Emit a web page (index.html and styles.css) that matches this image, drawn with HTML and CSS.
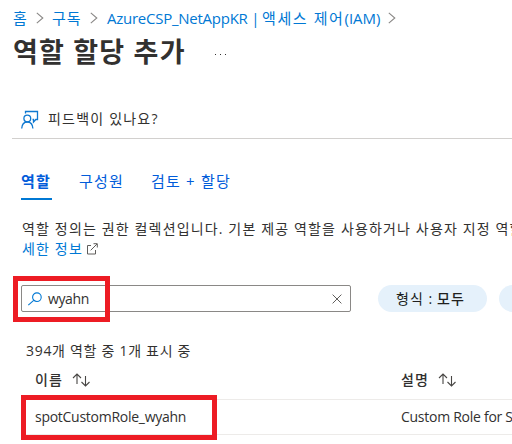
FILE: index.html
```html
<!DOCTYPE html>
<html lang="ko">
<head>
<meta charset="utf-8">
<title>역할 할당 추가</title>
<link rel="stylesheet" href="styles.css">
</head>
<body>
<nav class="breadcrumb">
  <a class="c-home">홈</a>
  <svg class="chev" viewBox="0 0 8 12"><path d="M.8.8 6.8 6 .8 11.2"/></svg>
  <a class="c-sub">구독</a>
  <svg class="chev" viewBox="0 0 8 12"><path d="M.8.8 6.8 6 .8 11.2"/></svg>
  <a class="c-iam"><span class="c-name">AzureCSP_NetAppKR |</span><span class="c-access">액세스 제어<span class="c-code">(IAM)</span></span></a>
  <svg class="chev" viewBox="0 0 8 12"><path d="M.8.8 6.8 6 .8 11.2"/></svg>
</nav>
<header class="title-row"><h1>역할 할당 추가</h1><span class="more"><i></i><i></i><i></i></span></header>
<div class="toolbar">
  <svg class="feedback-icon" viewBox="0 0 18 19"><path d="M4.500 3.500V1.500h12v8h-1.700l-2.300 2.600V9.500h-1"/><circle cx="6.300" cy="8.500" r="3.400"/><path d="M.7 18.500c.3-4 2.500-6.500 5.600-6.500s5.300 2.500 5.600 6.500"/></svg>
  <span>피드백이 있나요?</span>
</div>
<div class="tabs"><a class="tab active">역할</a><a class="tab t-members">구성원</a><a class="tab t-review">검토 + 할당</a></div>
<div class="desc">
  <div class="d1">역할 정의는 권한 컬렉션입니다. 기본 제공 역할을 사용하거나 사용자 지정 역할을</div>
  <div class="d2"><a>세한 정보</a><svg viewBox="0 0 12 12"><path d="M5 2.500H1.500v8.500h8V7M7.500.7h3.800v3.800M11 1 4.700 7.300"/></svg></div>
</div>
<div class="filters">
  <div class="search">
    <svg class="lens" viewBox="0 0 16 14"><circle cx="9.900" cy="5.200" r="4.300"/><path d="M6.700 8.300 1.300 13.200"/></svg>
    <span>wyahn</span>
    <svg class="clear" viewBox="0 0 10 10"><path d="m.6.6 8.800 8.800M9.400.6.6 9.400"/></svg>
    <div class="mark mark-search"></div>
  </div>
  <div class="pill"><span class="p-label">형식 :</span><b>모두</b></div>
  <div class="pill"></div>
</div>
<div class="count">394개 역할 중 1개 표시 중</div>
<div class="table">
  <div class="tr head">
    <div class="cell-name"><span>이름</span><svg class="sort" viewBox="0 0 18 14"><path d="M5 11V1M1 5l4-4 4 4M13.500 3v10M9.500 9l4 4 4-4"/></svg></div>
    <div class="cell-desc"><span>설명</span><svg class="sort" viewBox="0 0 18 14"><path d="M5 11V1M1 5l4-4 4 4M13.500 3v10M9.500 9l4 4 4-4"/></svg></div>
  </div>
  <div class="tr row">
    <div class="cell-name"><span>spotCustomRole_wyahn</span></div>
    <div class="cell-desc"><span>Custom Role for Spot</span></div>
    <div class="mark mark-row"></div>
  </div>
</div>
</body>
</html>
```
FILE: styles.css
```css
* { box-sizing: border-box; }
body {
  margin: 0;
  width: 512px;
  height: 444px;
  overflow: hidden;
  background: #fff;
  color: #323130;
  font: 14px/20px "Open Sans", "Noto Sans CJK KR", sans-serif;
  white-space: nowrap;
}
svg { fill: none; flex: none; }
.breadcrumb { display: flex; align-items: center; height: 36px; padding-left: 13px; color: #0078d4; font-size: 15px; }
.c-home { width: 23px; }
.c-sub { width: 38px; margin-left: 8px; letter-spacing: 1px; }
.c-iam { display: flex; width: 281px; margin-left: 9px; }
.c-name { width: 155px; letter-spacing: -.25px; }
.c-access { letter-spacing: 1.6px; }
.c-code { letter-spacing: 0; }
.chev { width: 8px; height: 12px; stroke: #8a8886; stroke-width: 1.1; }
.title-row { display: flex; align-items: center; height: 32px; padding-left: 13px; }
h1 { width: 202px; margin: 0; font-size: 27px; line-height: 32px; font-weight: 700; letter-spacing: 1.2px; }
.more { display: flex; gap: 4px; padding-top: 5px; }
.more i { width: 1px; height: 1px; background: #323130; }
.toolbar { display: flex; align-items: center; height: 39px; margin: 32px 0 0 12px; padding-left: 9px; border-bottom: 1px solid #d2d0ce; }
.toolbar span { margin-left: 9px; letter-spacing: 1.2px; }
.feedback-icon { width: 18px; height: 19px; stroke: #0f78d0; stroke-width: 1.3; }
.tabs { display: flex; height: 61px; padding: 23px 0 0 21px; color: #015cda; font-size: 15px; letter-spacing: 1.2px; }
.tab { height: 38px; line-height: 38px; }
.active { width: 31px; font-weight: 700; border-bottom: 2px solid #0078d4; }
.t-members { width: 46px; margin-left: 27px; }
.t-review { margin-left: 26px; }
.desc { padding: 19px 0 0 22px; line-height: 20px; letter-spacing: 1.15px; }
.d2 { display: flex; align-items: center; }
.d2 a { color: #0078d4; width: 64px; }
.d2 svg { width: 12px; height: 12px; stroke: #605e5c; }
.filters { display: flex; gap: 12px; margin-top: 26px; padding-left: 21px; }
.search { position: relative; display: flex; flex: none; align-items: center; width: 330px; height: 27px; margin-right: 15px; padding: 0 8px 0 5px; border: 1px solid #8a8886; border-radius: 2px; }
.lens { width: 16px; height: 14px; stroke: #0078d4; stroke-width: 1.1; }
.search span { margin-left: 5px; letter-spacing: -.4px; }
.clear { width: 10px; height: 10px; margin-left: auto; stroke: #605e5c; }
.mark { position: absolute; border: 5px solid #ed1c24; }
.mark-search { left: -9px; top: -10px; width: 97px; height: 46px; }
.pill { display: flex; align-items: center; flex: none; width: 109px; height: 27px; padding-left: 18px; border-radius: 14px; background: #e5f1fb; color: #201f1e; letter-spacing: 1px; }
.pill b { margin-left: 4px; font-weight: 500; }
.count { height: 20px; margin: 29px 0 0 26px; letter-spacing: .7px; }
.table { margin-left: 21px; }
.tr { display: flex; align-items: center; border-bottom: 1px solid #edebe9; }
.head { height: 39px; font-weight: 500; letter-spacing: 1px; }
.row { position: relative; height: 35px; letter-spacing: -.27px; }
.cell-name { display: flex; flex: none; align-items: center; width: 366px; padding-left: 14px; }
.cell-desc { display: flex; flex: none; align-items: center; padding-left: 14px; }
.sort { width: 18px; height: 14px; margin-left: 9px; stroke: #484644; stroke-width: 1.1; }
.mark-row { left: 0; top: -5px; width: 196px; height: 45px; }
```
